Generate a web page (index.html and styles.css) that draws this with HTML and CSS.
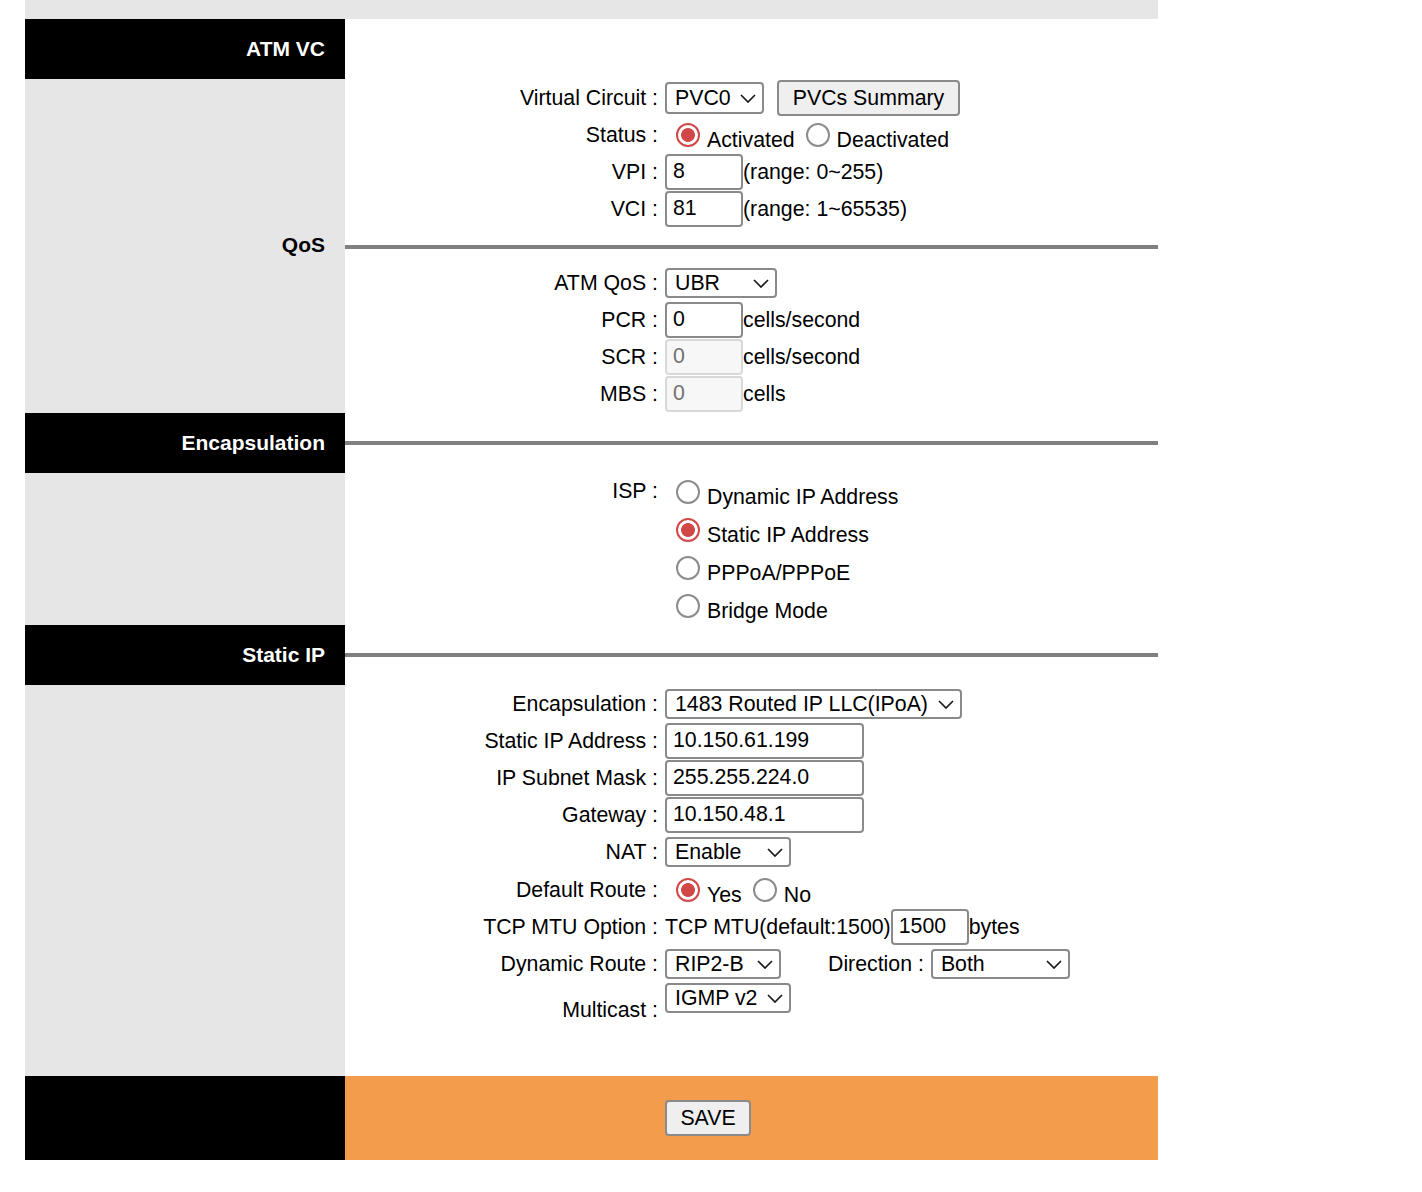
FILE: index.html
```html
<!DOCTYPE html>
<html>
<head>
<meta charset="utf-8">
<title>ATM VC</title>
<link rel="stylesheet" href="styles.css">
</head>
<body>
<div class="page">
  <div class="strip"></div>

  <section class="sec head">
    <div class="side black"><span class="htxt">ATM VC</span></div>
    <div class="main"></div>
  </section>

  <section class="sec">
    <div class="side"></div>
    <div class="main form">
      <div class="row">
        <div class="lbl">Virtual Circuit :</div>
        <div class="val">
          <span class="sel"><select class="s-pvc"><option>PVC0</option></select><svg class="chev" width="16" height="9" viewBox="0 0 16 9"><path d="M1 1l7 7 7-7" fill="none" stroke="#1a1a1a" stroke-width="1.7"/></svg></span>
          <button class="btn btn-pvc">PVCs Summary</button>
        </div>
      </div>
      <div class="row">
        <div class="lbl">Status :</div>
        <div class="val">
          <input type="radio" class="radio" name="st" checked><span class="rt">Activated</span>
          <input type="radio" class="radio" name="st"><span class="rt">Deactivated</span>
        </div>
      </div>
      <div class="row">
        <div class="lbl">VPI :</div>
        <div class="val"><input class="inp" type="text" value="8"><span>(range: 0~255)</span></div>
      </div>
      <div class="row">
        <div class="lbl">VCI :</div>
        <div class="val"><input class="inp" type="text" value="81"><span>(range: 1~65535)</span></div>
      </div>
    </div>
  </section>

  <section class="sec head qos">
    <div class="side"><span class="htxt">QoS</span></div>
    <div class="main"><div class="rule"></div></div>
  </section>

  <section class="sec">
    <div class="side"></div>
    <div class="main form f2">
      <div class="row">
        <div class="lbl">ATM QoS :</div>
        <div class="val"><span class="sel"><select class="s-ubr"><option>UBR</option></select><svg class="chev" width="16" height="9" viewBox="0 0 16 9"><path d="M1 1l7 7 7-7" fill="none" stroke="#1a1a1a" stroke-width="1.7"/></svg></span></div>
      </div>
      <div class="row">
        <div class="lbl">PCR :</div>
        <div class="val"><input class="inp" type="text" value="0"><span>cells/second</span></div>
      </div>
      <div class="row">
        <div class="lbl">SCR :</div>
        <div class="val"><input class="inp" type="text" value="0" disabled><span>cells/second</span></div>
      </div>
      <div class="row">
        <div class="lbl">MBS :</div>
        <div class="val"><input class="inp" type="text" value="0" disabled><span>cells</span></div>
      </div>
    </div>
  </section>

  <section class="sec head">
    <div class="side black"><span class="htxt">Encapsulation</span></div>
    <div class="main"><div class="rule"></div></div>
  </section>

  <section class="sec">
    <div class="side"></div>
    <div class="main form">
      <div class="row isp">
        <div class="lbl">ISP :</div>
        <div class="val col">
          <div class="opt"><input type="radio" class="radio" name="isp"><span class="rt">Dynamic IP Address</span></div>
          <div class="opt"><input type="radio" class="radio" name="isp" checked><span class="rt">Static IP Address</span></div>
          <div class="opt"><input type="radio" class="radio" name="isp"><span class="rt">PPPoA/PPPoE</span></div>
          <div class="opt"><input type="radio" class="radio" name="isp"><span class="rt">Bridge Mode</span></div>
        </div>
      </div>
    </div>
  </section>

  <section class="sec head">
    <div class="side black"><span class="htxt">Static IP</span></div>
    <div class="main"><div class="rule"></div></div>
  </section>

  <section class="sec">
    <div class="side"></div>
    <div class="main form f4">
      <div class="row">
        <div class="lbl">Encapsulation :</div>
        <div class="val"><span class="sel"><select class="s-enc"><option>1483 Routed IP LLC(IPoA)</option></select><svg class="chev" width="16" height="9" viewBox="0 0 16 9"><path d="M1 1l7 7 7-7" fill="none" stroke="#1a1a1a" stroke-width="1.7"/></svg></span></div>
      </div>
      <div class="row">
        <div class="lbl">Static IP Address :</div>
        <div class="val"><input class="inp wide" type="text" value="10.150.61.199"></div>
      </div>
      <div class="row">
        <div class="lbl">IP Subnet Mask :</div>
        <div class="val"><input class="inp wide" type="text" value="255.255.224.0"></div>
      </div>
      <div class="row">
        <div class="lbl">Gateway :</div>
        <div class="val"><input class="inp wide" type="text" value="10.150.48.1"></div>
      </div>
      <div class="row h38">
        <div class="lbl">NAT :</div>
        <div class="val"><span class="sel"><select class="s-nat"><option>Enable</option></select><svg class="chev" width="16" height="9" viewBox="0 0 16 9"><path d="M1 1l7 7 7-7" fill="none" stroke="#1a1a1a" stroke-width="1.7"/></svg></span></div>
      </div>
      <div class="row">
        <div class="lbl">Default Route :</div>
        <div class="val">
          <input type="radio" class="radio" name="dr" checked><span class="rt">Yes</span>
          <input type="radio" class="radio" name="dr"><span class="rt">No</span>
        </div>
      </div>
      <div class="row">
        <div class="lbl">TCP MTU Option :</div>
        <div class="val"><span>TCP MTU(default:1500)</span><input class="inp" type="text" value="1500"><span>bytes</span></div>
      </div>
      <div class="row h38">
        <div class="lbl">Dynamic Route :</div>
        <div class="val">
          <span class="sel"><select class="s-rip"><option>RIP2-B</option></select><svg class="chev" width="16" height="9" viewBox="0 0 16 9"><path d="M1 1l7 7 7-7" fill="none" stroke="#1a1a1a" stroke-width="1.7"/></svg></span>
          <span class="dirl">Direction :</span>
          <span class="sel"><select class="s-dir"><option>Both</option></select><svg class="chev" width="16" height="9" viewBox="0 0 16 9"><path d="M1 1l7 7 7-7" fill="none" stroke="#1a1a1a" stroke-width="1.7"/></svg></span>
        </div>
      </div>
      <div class="row mc">
        <div class="lbl">Multicast :</div>
        <div class="val top"><span class="sel"><select class="s-igmp"><option>IGMP v2</option></select><svg class="chev" width="16" height="9" viewBox="0 0 16 9"><path d="M1 1l7 7 7-7" fill="none" stroke="#1a1a1a" stroke-width="1.7"/></svg></span></div>
      </div>
    </div>
  </section>

  <section class="sec foot">
    <div class="side black"></div>
    <div class="main orange"><button class="btn btn-save">SAVE</button></div>
  </section>
</div>
</body>
</html>
```

FILE: styles.css
```css
html, body {
  margin: 0;
  padding: 0;
  background: #fff;
}

body {
  font-family: "Liberation Sans", Arial, Helvetica, sans-serif;
  font-size: 21.3px;
  line-height: 24px;
  color: #000;
}

.page {
  margin-left: 25px;
  width: 1133px;
}

.strip {
  height: 19px;
  background: #e6e6e6;
}

.sec {
  display: grid;
  grid-template-columns: 320px 813px;
}

.side {
  background: #e6e6e6;
}

.side.black {
  background: #000;
  color: #fff;
}

.head .side {
  display: flex;
  align-items: center;
  justify-content: flex-end;
  padding-right: 20px;
  height: 60px;
  font-weight: bold;
  font-size: 21px;
}

.head.qos .side {
  height: 36px;
}

.head .main {
  display: flex;
  align-items: center;
}

.rule {
  flex: 1;
  height: 4px;
  background: #808080;
}

.qos .rule {
  margin-top: 4px;
}

.form {
  display: flex;
  flex-direction: column;
}

.f2 {
  height: 150px;
  box-sizing: border-box;
  padding-top: 1px;
}

.f4 {
  padding-bottom: 39px;
}

.row {
  display: grid;
  grid-template-columns: 313px auto;
  column-gap: 7px;
  align-items: center;
  height: 37px;
}

.row.h38 {
  height: 38px;
}

.row.mc {
  height: 54px;
}

.lbl {
  text-align: right;
  white-space: nowrap;
}

.val {
  display: flex;
  align-items: center;
  white-space: nowrap;
}

.val.top {
  align-self: start;
}

.row.isp {
  height: auto;
  align-items: start;
}

.isp .lbl {
  padding-top: 6px;
}

.val.col {
  flex-direction: column;
  align-items: flex-start;
}

.opt {
  display: flex;
  align-items: center;
  height: 38px;
}

.rt {
  margin-top: 10px;
}

.radio {
  -webkit-appearance: none;
  appearance: none;
  box-sizing: border-box;
  width: 24px;
  height: 24px;
  margin: 0 7px 0 11px;
  border: 2px solid #8c8c8c;
  border-radius: 50%;
  background: #fff;
  flex: none;
}

.radio:checked {
  border: 2.5px solid #d04848;
  background: radial-gradient(circle, #d04848 0, #d04848 6.5px, #fff 7.3px);
}

.inp {
  box-sizing: border-box;
  width: 78px;
  height: 36px;
  margin: 0;
  padding: 0 6px;
  border: 2px solid #8a8a8a;
  border-radius: 4px;
  background: #fff;
  font: inherit;
  color: #000;
  outline: none;
}

.inp.wide {
  width: 199px;
}

.inp:disabled {
  background: #f7f7f7;
  border-color: #d8d8d8;
  color: #707070;
}

.sel {
  position: relative;
  display: inline-flex;
}

.sel select {
  -webkit-appearance: none;
  appearance: none;
  box-sizing: border-box;
  height: 30px;
  margin: 0;
  padding: 0 24px 0 8px;
  border: 2px solid #8a8a8a;
  border-radius: 4px;
  background: #fff;
  font: inherit;
  color: #000;
}

.chev {
  position: absolute;
  right: 8px;
  top: calc(50% - 4px);
  pointer-events: none;
}

.s-pvc { width: 99px; height: 32px !important; }
.s-ubr { width: 112px; }
.s-enc { width: 297px; }
.s-nat { width: 126px; }
.s-rip { width: 116px; }
.s-dir { width: 139px; }
.s-igmp { width: 126px; }

.dirl {
  margin-left: 47px;
  margin-right: 7px;
}

.btn {
  box-sizing: border-box;
  height: 36px;
  margin: 0;
  padding: 0;
  border: 2px solid #8a8a8a;
  border-radius: 4px;
  background: #efefef;
  font: inherit;
  color: #000;
}

.btn-pvc {
  width: 183px;
  margin-left: 13px;
}

.btn-save {
  width: 86px;
}

.foot .side {
  height: 84px;
}

.orange {
  background: #f29d4b;
  display: flex;
  align-items: center;
  padding-left: 320px;
}
```
